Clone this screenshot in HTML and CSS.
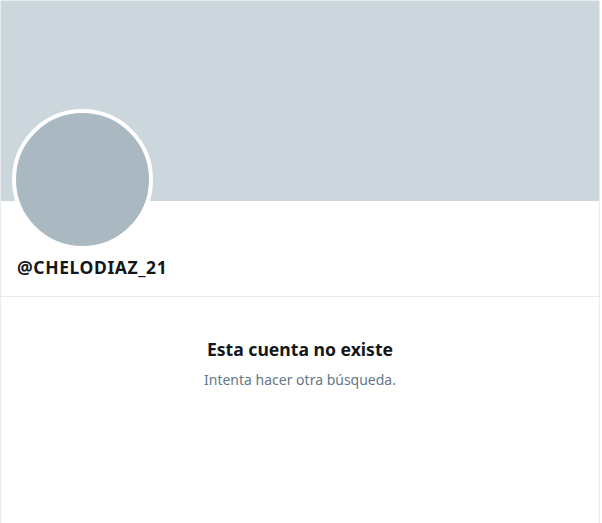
FILE: index.html
```html
<!DOCTYPE html>
<html lang="es">

<head>
    <meta charset="UTF-8">
    <meta name="viewport" content="width=device-width, initial-scale=1.0">
    <title>@CHELODIAZ_21</title>
    <link rel="stylesheet" href="styles.css">
</head>

<body>
    <div class="profile">
        <div class="banner"></div>

        <div class="profile-head">
            <div class="avatar"></div>
            <h2 class="handle">@CHELODIAZ_21</h2>
        </div>

        <div class="empty">
            <h3 class="empty-title">Esta cuenta no existe</h3>
            <p class="empty-text">Intenta hacer otra búsqueda.</p>
        </div>
    </div>
</body>

</html>
```

FILE: styles.css
```css
* {
    margin: 0;
    padding: 0;
    box-sizing: border-box;
    font-family: "Noto Sans", "Open Sans", sans-serif;
}

body {
    background-color: #fff;
}

.profile {
    width: 600px;
    height: 523px;
    border: 1px solid #e6ecf0;
    border-bottom: none;
}

.banner {
    height: 200px;
    background-color: #ccd6dd;
}

.profile-head {
    display: flex;
    flex-direction: column;
    align-items: flex-start;
    height: 96px;
    padding: 0 16px 0 11px;
    border-bottom: 1px solid #e6ecf0;
}

.avatar {
    width: 141px;
    height: 141px;
    margin-top: -92px;
    border: 4px solid #fff;
    border-radius: 50%;
    background-color: #aab8c2;
}

.handle {
    margin-top: 5px;
    padding-left: 5px;
    font-size: 17.5px;
    font-weight: 700;
    letter-spacing: 0.6px;
    line-height: 24px;
    color: #14171a;
}

.empty {
    padding-top: 40px;
    text-align: center;
}

.empty-title {
    font-size: 17.6px;
    font-weight: 700;
    line-height: 24px;
    color: #14171a;
}

.empty-text {
    margin-top: 9px;
    font-size: 14px;
    line-height: 20px;
    color: #657786;
}
```
